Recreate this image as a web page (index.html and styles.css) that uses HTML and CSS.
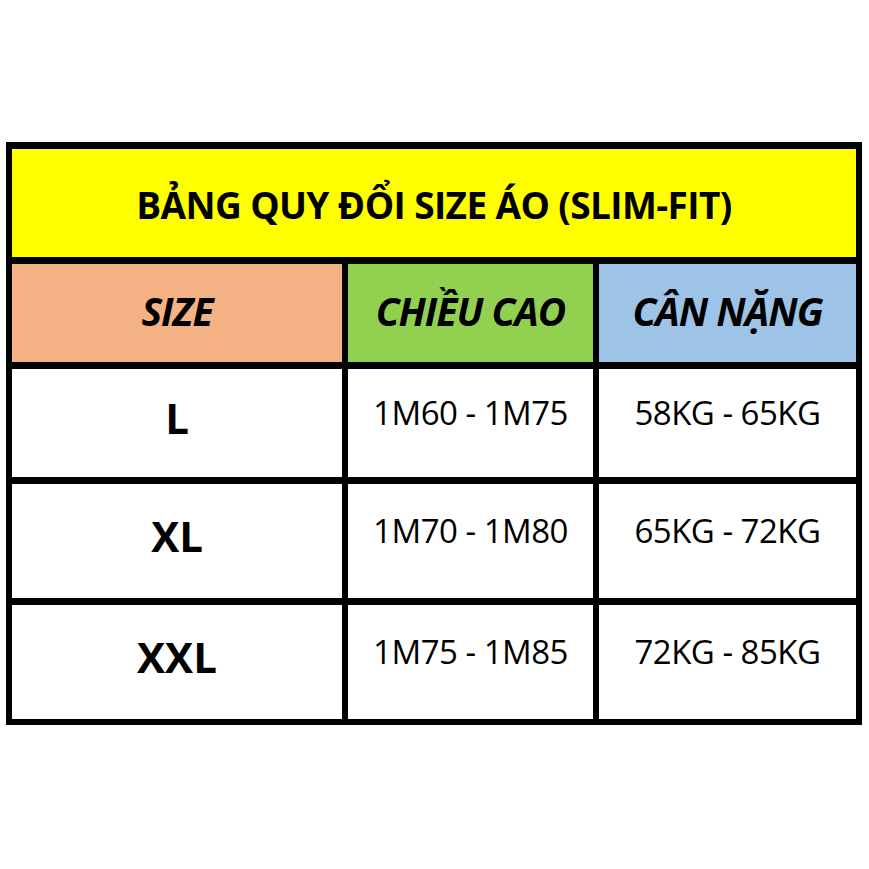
FILE: index.html
```html
<!DOCTYPE html>
<html lang="vi">
<head>
<meta charset="utf-8">
<link rel="stylesheet" href="styles.css">
</head>
<body>
<div class="page">
  <div class="chart">
    <div class="cell title">BẢNG QUY ĐỔI SIZE ÁO (SLIM-FIT)</div>
    <div class="cell head c-size">SIZE</div>
    <div class="cell head c-height">CHIỀU CAO</div>
    <div class="cell head c-weight">CÂN NẶNG</div>
    <div class="cell size">L</div>
    <div class="cell val">1M60 - 1M75</div>
    <div class="cell val">58KG - 65KG</div>
    <div class="cell size">XL</div>
    <div class="cell val">1M70 - 1M80</div>
    <div class="cell val">65KG - 72KG</div>
    <div class="cell size">XXL</div>
    <div class="cell val">1M75 - 1M85</div>
    <div class="cell val">72KG - 85KG</div>
  </div>
</div>
</body>
</html>
```

FILE: styles.css
```css
html, body {
  margin: 0;
  padding: 0;
  background: #ffffff;
}
.page {
  padding: 142px 0 0 6px;
}
.chart {
  width: 856px;
  box-sizing: border-box;
  background: #000;
  padding: 7px 6px 6px 6px;
  display: grid;
  grid-template-columns: 330px 245px 257px;
  grid-template-rows: 108px 98px 108px 114px 114px;
  column-gap: 6px;
  row-gap: 7px;
  font-family: "Open Sans", "Noto Sans", sans-serif;
  color: #000;
}
.cell {
  background: #fff;
  display: flex;
  justify-content: center;
  align-items: center;
  white-space: nowrap;
  box-sizing: border-box;
}
.title {
  grid-column: 1 / 4;
  background: #ffff00;
  font-weight: 700;
  font-size: 37px;
  letter-spacing: -0.6px;
  padding-top: 2px;
}
.head {
  font-weight: 700;
  font-style: italic;
  font-size: 39px;
  letter-spacing: -1px;
  padding-bottom: 5px;
}
.c-size { background: #f4b183; }
.c-height { background: #92d050; }
.c-weight { background: #9dc3e6; }
.size {
  font-weight: 700;
  font-size: 42px;
  padding-bottom: 12px;
}
.val {
  font-size: 33px;
  letter-spacing: -0.5px;
  padding-bottom: 22px;
}
```
